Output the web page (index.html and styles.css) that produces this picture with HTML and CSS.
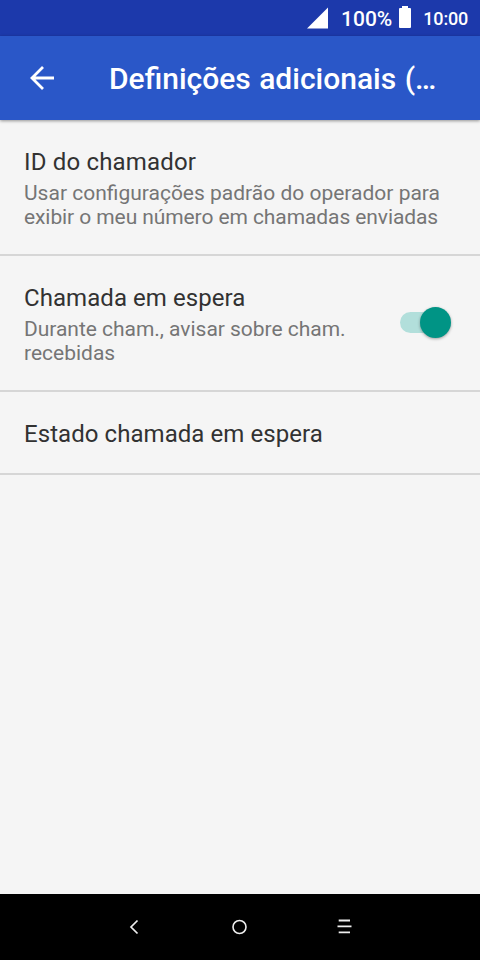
FILE: index.html
```html
<!DOCTYPE html>
<html lang="pt">
<head>
<meta charset="utf-8">
<title>Definições adicionais</title>
<link rel="stylesheet" href="styles.css">
</head>
<body>
<div class="status-bar">
  <svg class="signal" width="22" height="22" viewBox="0 0 22 22"><path d="M0 21.5 21 0.5V21.5Z" fill="#fff"/></svg>
  <span class="battery-level">100%</span>
  <svg class="battery" width="12" height="22" viewBox="0 0 12 22"><path d="M3 0H9V2H11Q12 2 12 3V21Q12 22 11 22H1Q0 22 0 21V3Q0 2 1 2H3Z" fill="#fff"/></svg>
  <span class="clock">10:00</span>
</div>
<header class="app-bar">
  <svg class="back" width="24" height="24" viewBox="0 0 24 24" fill="none" stroke="#fff" stroke-width="2.8"><path d="M24 12H2M13 1 2 12 13 23"/></svg>
  <h1 class="app-title">Definições adicionais (…</h1>
</header>
<main class="settings">
  <section class="row">
    <div class="row-text">
      <h2 class="row-title row-title-wide">ID do chamador</h2>
      <p class="row-summary">Usar configurações padrão do operador para<br><span class="tight">exibir o meu número em chamadas enviadas</span></p>
    </div>
  </section>
  <section class="row">
    <div class="row-text">
      <h2 class="row-title">Chamada em espera</h2>
      <p class="row-summary"><span class="snug">Durante cham., avisar sobre cham.</span><br>recebidas</p>
    </div>
    <div class="switch"><div class="thumb"></div></div>
  </section>
  <section class="row row-single">
    <h2 class="row-title">Estado chamada em espera</h2>
  </section>
</main>
<nav class="nav-bar">
  <svg width="16" height="16" viewBox="0 0 16 16" fill="none" stroke="#eee" stroke-width="1.7"><path d="M11.5 1.5 5 8 11.5 14.5"/></svg>
  <svg width="16" height="16" viewBox="0 0 16 16" fill="none" stroke="#eee" stroke-width="1.6"><circle cx="8.5" cy="8" r="6.5"/></svg>
  <svg width="16" height="16" viewBox="0 0 16 16" fill="none" stroke="#eee" stroke-width="1.8"><path d="M2.7 1.5H14M1.5 7.3H15.5M2.7 13.3H14"/></svg>
</nav>
</body>
</html>
```
FILE: styles.css
```css
* {
  box-sizing: border-box;
}

body {
  margin: 0;
  width: 480px;
  height: 960px;
  display: flex;
  flex-direction: column;
  background: #f5f5f5;
  font-family: Roboto, "Liberation Sans", sans-serif;
  overflow: hidden;
}

h1,
h2,
p {
  margin: 0;
  font-weight: 400;
  white-space: nowrap;
}

.status-bar {
  flex: none;
  height: 36px;
  display: flex;
  justify-content: flex-end;
  align-items: center;
  padding-right: 12px;
  background: #1c39ab;
  color: #fff;
  font-weight: 500;
  line-height: 36px;
}

.signal {
  margin-right: 12px;
}

.battery-level {
  font-size: 21px;
  margin-right: 7px;
  padding-top: 2px;
}

.battery {
  margin: 0 12px 2px 0;
}

.clock {
  font-size: 18px;
  letter-spacing: -0.2px;
  padding-top: 2px;
}

.app-bar {
  flex: none;
  height: 84px;
  display: flex;
  align-items: center;
  padding-left: 30px;
  background: #2a57c8;
  color: #fff;
  box-shadow: 0 1px 3px rgba(0, 0, 0, 0.4);
}

.app-title {
  margin-left: 55px;
  padding-top: 1px;
  font-size: 30px;
  font-weight: 500;
  line-height: 36px;
  word-spacing: 1px;
}

.settings {
  flex: 1;
}

.row {
  height: 136px;
  display: flex;
  justify-content: space-between;
  padding: 26px 29px 0 24px;
  border-bottom: 2px solid #d6d6d6;
}

.row-title {
  color: #323232;
  font-size: 24px;
  line-height: 32px;
  letter-spacing: 0.06px;
}

.row-title-wide {
  letter-spacing: 0.17px;
}

.row-summary {
  margin-top: 3px;
  color: #757575;
  font-size: 21px;
  line-height: 24px;
}

.tight {
  letter-spacing: -0.09px;
}

.snug {
  letter-spacing: -0.03px;
}

.row-single {
  height: 83px;
}

.switch {
  width: 51px;
  height: 21px;
  margin-top: 30px;
  display: flex;
  justify-content: flex-end;
  align-items: center;
  background: linear-gradient(#b2dfdb, #b2dfdb) 0 0 / 40px 100% no-repeat;
  border-radius: 11px 0 0 11px;
}

.thumb {
  flex: none;
  width: 31px;
  height: 31px;
  border-radius: 50%;
  background: #009485;
  box-shadow: 0 1px 3px rgba(0, 0, 0, 0.35);
}

.nav-bar {
  flex: none;
  height: 66px;
  display: flex;
  justify-content: space-between;
  align-items: center;
  padding: 0 128px 0 126px;
  background: #000;
}
```
